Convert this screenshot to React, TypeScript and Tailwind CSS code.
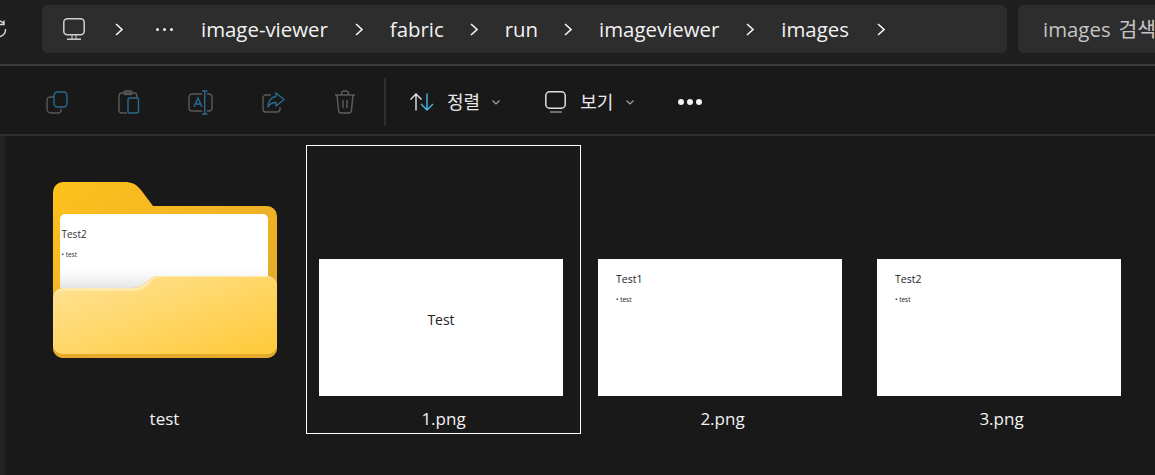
import React from "react";

const FONT = "font-['Open_Sans','Noto_Sans_CJK_KR',sans-serif]";

function Chevron() {
  return (
    <svg width="8" height="13" viewBox="0 0 8 13" fill="none" stroke="#f2f2f2" strokeWidth="1.6" className="shrink-0">
      <path d="M1 1 L7 6.5 L1 12" />
    </svg>
  );
}

function SmallChevron() {
  return (
    <svg width="8" height="5" viewBox="0 0 8 5" fill="none" stroke="#a8a8a8" strokeWidth="1.1" className="shrink-0">
      <path d="M0.5 0.5 L4 4 L7.5 0.5" />
    </svg>
  );
}

function Monitor() {
  return (
    <svg width="22" height="22" viewBox="0 0 22 22" fill="none" stroke="#d0d0d0" strokeWidth="1.5" className="shrink-0">
      <rect x="0.8" y="0.8" width="20.4" height="16" rx="3.5" />
      <path d="M4 21.2 H18" />
      <path d="M9 17 V21 M13 17 V21" strokeWidth="1" />
    </svg>
  );
}

function ViewIcon() {
  return (
    <svg width="21" height="22" viewBox="0 0 21 22" fill="none" stroke="#e0e0e0" strokeWidth="1.5" className="shrink-0">
      <rect x="0.8" y="0.8" width="19.4" height="16.4" rx="3.8" />
      <path d="M5 21 H17" strokeWidth="1.2" stroke="#a8a8a8" />
    </svg>
  );
}

const G = "#5a5a5a";
const B = "#2a6a8e";

function CopyIcon() {
  return (
    <svg width="23" height="23" viewBox="0 0 23 23" fill="none" strokeWidth="1.4">
      <path d="M8 6 H4 A3 3 0 0 0 1 9 V18 A4 4 0 0 0 5 22 H12 A3 3 0 0 0 15 18" stroke={G} />
      <rect x="8" y="1" width="13" height="15" rx="3.5" stroke={B} />
    </svg>
  );
}

function PasteIcon() {
  return (
    <svg width="23" height="24" viewBox="0 0 23 24" fill="none" strokeWidth="1.4">
      <path d="M9 23 H4 A3 3 0 0 1 1 20 V6 A3 3 0 0 1 4 3 H16 A3 3 0 0 1 19 6 V8" stroke={G} />
      <rect x="6" y="1" width="8" height="3.5" rx="1.5" stroke={G} />
      <rect x="10" y="8" width="10.5" height="15" rx="2" stroke={B} />
    </svg>
  );
}

function RenameIcon() {
  return (
    <svg width="25" height="25" viewBox="0 0 25 25" fill="none" strokeWidth="1.4">
      <path d="M14 4 H4 A3 3 0 0 0 1 7 V18 A3 3 0 0 0 4 21 H14" stroke={G} />
      <path d="M19 4 H21 A3 3 0 0 1 24 7 V18 A3 3 0 0 1 21 21 H19" stroke={G} />
      <path d="M6 17 L10 8 L14 17 M7.5 14 H12.5" stroke={B} />
      <path d="M14 1 H19.5 M16.7 1 V24 M14 24 H19.5" stroke={B} />
    </svg>
  );
}

function ShareIcon() {
  return (
    <svg width="23" height="23" viewBox="0 0 23 23" fill="none" strokeWidth="1.4">
      <path d="M9 4 H4 A3 3 0 0 0 1 7 V18 A3 3 0 0 0 4 21 H15 A3 3 0 0 0 18 18 V16" stroke={G} />
      <path d="M14 2 L22 8.5 L14 15 V11.5 C10 11.5 7.5 13 6 16 C6 10.5 9 6 14 5.5 Z" stroke={B} strokeLinejoin="round" />
    </svg>
  );
}

function TrashIcon() {
  return (
    <svg width="22" height="24" viewBox="0 0 22 24" fill="none" stroke="#5e5e5e" strokeWidth="1.4">
      <path d="M1 5 H21" />
      <path d="M7.5 5 V3.5 A2.5 2.5 0 0 1 10 1 H12 A2.5 2.5 0 0 1 14.5 3.5 V5" />
      <path d="M3 5 L4.5 20 A3 3 0 0 0 7.5 23 H14.5 A3 3 0 0 0 17.5 20 L19 5" />
      <path d="M9 10 V18 M13 10 V18" />
    </svg>
  );
}

function SortIcon() {
  return (
    <svg width="24" height="18" viewBox="0 0 24 18" fill="none" strokeWidth="1.4">
      <path d="M6 17.5 V1 M0.5 6.5 L6 1 L11.5 6.5" stroke="#e4e4e4" />
      <path d="M17 0.5 V17 M11 11 L17 17 L23 11" stroke="#4cb4ea" />
    </svg>
  );
}

function Refresh() {
  return (
    <svg width="7" height="18" viewBox="13 0 7 18" fill="none" stroke="#d8d8d8" strokeWidth="1.4" className="shrink-0">
      <path d="M18.5 9 A7.5 7.5 0 0 1 6 15" />
      <path d="M5 3.5 A7.5 7.5 0 0 1 17 4 M17 0.5 V4.5 H13" />
    </svg>
  );
}

function Folder() {
  const front =
    "M53 298 A10 10 0 0 1 63 288 H132 C140 288 144 284 149 280 C152 277 155 276 158 276 H267 A10 10 0 0 1 277 286 V348 A10 10 0 0 1 267 358 H63 A10 10 0 0 1 53 348 Z";
  return (
    <svg width="224" height="176" viewBox="53 182 224 176" className="block">
      <defs>
        <linearGradient id="back" x1="0" y1="0" x2="1" y2="1">
          <stop offset="0" stopColor="#ffc11c" />
          <stop offset="1" stopColor="#e0a62c" />
        </linearGradient>
        <linearGradient id="front" x1="0" y1="0" x2="1" y2="1">
          <stop offset="0" stopColor="#ffe296" />
          <stop offset="1" stopColor="#ffca38" />
        </linearGradient>
        <linearGradient id="shade" x1="0" y1="0" x2="0" y2="1">
          <stop offset="0" stopColor="#ffffff" stopOpacity="0" />
          <stop offset="1" stopColor="#c4c4c4" />
        </linearGradient>
      </defs>
      <path
        d="M53 192 A10 10 0 0 1 63 182 H124 C132 182 136 184 141 190 L153 206 H267 A10 10 0 0 1 277 216 V348 A10 10 0 0 1 267 358 H63 A10 10 0 0 1 53 348 Z"
        fill="url(#back)"
      />
      <path d="M60 219 A5 5 0 0 1 65 214 H263 A5 5 0 0 1 268 219 V300 H60 Z" fill="#ffffff" />
      <rect x="60" y="262" width="208" height="38" fill="url(#shade)" />
      <text x="61.5" y="238" fontSize="10" fill="#333" fontFamily="'Open Sans',sans-serif">Test2</text>
      <text x="61.5" y="257" fontSize="6.5" fill="#333" fontFamily="'Open Sans',sans-serif">• test</text>
      <path d={front} fill="#e5a92c" />
      <path
        d="M53 298 A10 10 0 0 1 63 288 H132 C140 288 144 284 149 280 C152 277 155 276 158 276 H267 A10 10 0 0 1 277 286 V344 A10 10 0 0 1 267 354 H63 A10 10 0 0 1 53 344 Z"
        fill="#ffe9ac"
      />
      <path
        d="M53 300 A9 9 0 0 1 63 291 H133 C141 291 146 287 151 282 C154 279 157 277 160 277 H267 A10 10 0 0 1 277 287 V344 A10 10 0 0 1 267 354 H63 A10 10 0 0 1 53 344 Z"
        fill="url(#front)"
      />
    </svg>
  );
}

const CRUMBS: { name: string; before: string; after: string }[] = [
  { name: "image-viewer", before: "ml-[28px]", after: "ml-[27px]" },
  { name: "fabric", before: "ml-[27px]", after: "ml-[26px]" },
  { name: "run", before: "ml-[27px]", after: "ml-[26px]" },
  { name: "imageviewer", before: "ml-[27px]", after: "ml-[27px]" },
  { name: "images", before: "ml-[27px]", after: "ml-[28px]" },
];

function Tile({ name, selected, children }: { name: string; selected?: boolean; children: React.ReactNode }) {
  return (
    <div
      className={`w-[275px] h-[289px] shrink-0 border flex flex-col items-center ${selected ? "border-white" : "border-transparent"}`}
    >
      <div className="h-[252px] w-full flex items-end justify-center">{children}</div>
      <div className="mt-[10px] text-[17px] leading-[22px] text-[#f2f2f2]">{name}</div>
    </div>
  );
}

function Slide({ title }: { title: string }) {
  return (
    <div className="w-[244px] h-[137px] mb-[2px] mr-[5px] bg-white pl-[18px] pt-[12px] text-[#222]">
      <div className="text-[10.5px] leading-[16px]">{title}</div>
      <div className="mt-[9px] text-[6.5px] leading-[8px]">• test</div>
    </div>
  );
}

export default function App() {
  return (
    <div className={`w-[1155px] h-[475px] overflow-hidden bg-[#191919] flex flex-col ${FONT}`}>
      <header className="h-[66px] shrink-0 bg-[#1f1f1f] border-b-2 border-[#3a3a3a] flex items-start pt-[5px]">
        <div className="w-[42px] h-[48px] flex items-center">
          <Refresh />
        </div>
        <nav className="w-[965px] h-[48px] bg-[#2d2d2d] rounded-[6px] flex items-center pl-[21px]">
          <Monitor />
          <div className="ml-[30px]"><Chevron /></div>
          <span className="ml-[33px] w-[17px] flex gap-[4px]">
            <i className="w-[3px] h-[3px] bg-[#f2f2f2] rounded-full" />
            <i className="w-[3px] h-[3px] bg-[#f2f2f2] rounded-full" />
            <i className="w-[3px] h-[3px] bg-[#f2f2f2] rounded-full" />
          </span>
          {CRUMBS.map((c) => (
            <React.Fragment key={c.name}>
              <span className={`${c.before} text-[20.4px] leading-[26px] text-[#f2f2f2]`}>{c.name}</span>
              <div className={c.after}><Chevron /></div>
            </React.Fragment>
          ))}
        </nav>
        <div className="ml-[11px] flex-1 h-[48px] bg-[#2d2d2d] rounded-l-[6px] flex items-center pl-[25px] text-[20.4px] leading-[26px] text-[#c4c4c4] whitespace-nowrap overflow-hidden">
          images<span className="ml-[8px]">검색</span>
        </div>
      </header>
      <div className="h-[70px] shrink-0 border-b-2 border-[#2f2f2f] flex items-center pt-[4px]">
        <div className="ml-[46px]"><CopyIcon /></div>
        <div className="ml-[49px]"><PasteIcon /></div>
        <div className="ml-[47px]"><RenameIcon /></div>
        <div className="ml-[49px]"><ShareIcon /></div>
        <div className="ml-[49px]"><TrashIcon /></div>
        <div className="ml-[28px] w-[2px] h-[48px] bg-[#2f2f2f]" />
        <div className="ml-[24px]"><SortIcon /></div>
        <span className="ml-[13px] text-[18px] leading-[24px] text-[#e8e8e8]">정렬</span>
        <div className="ml-[12px]"><SmallChevron /></div>
        <div className="ml-[45px]"><ViewIcon /></div>
        <span className="ml-[14px] text-[18px] leading-[24px] text-[#e8e8e8]">보기</span>
        <div className="ml-[13px]"><SmallChevron /></div>
        <div className="ml-[44px] flex gap-[3px]">
          <i className="w-[6px] h-[6px] bg-[#f2f2f2] rounded-full" />
          <i className="w-[6px] h-[6px] bg-[#f2f2f2] rounded-full" />
          <i className="w-[6px] h-[6px] bg-[#f2f2f2] rounded-full" />
        </div>
      </div>
      <main className="flex-1 flex pl-[22px] pt-[9px] gap-[4px] border-l-[5px] border-[#232323]">
        <Tile name="test">
          <div className="mb-[40px]"><Folder /></div>
        </Tile>
        <Tile name="1.png" selected>
          <div className="w-[244px] h-[137px] mb-[2px] mr-[5px] bg-white flex items-center justify-center pb-[16px] text-[14px] text-[#222]">Test</div>
        </Tile>
        <Tile name="2.png"><Slide title="Test1" /></Tile>
        <Tile name="3.png"><Slide title="Test2" /></Tile>
      </main>
    </div>
  );
}
